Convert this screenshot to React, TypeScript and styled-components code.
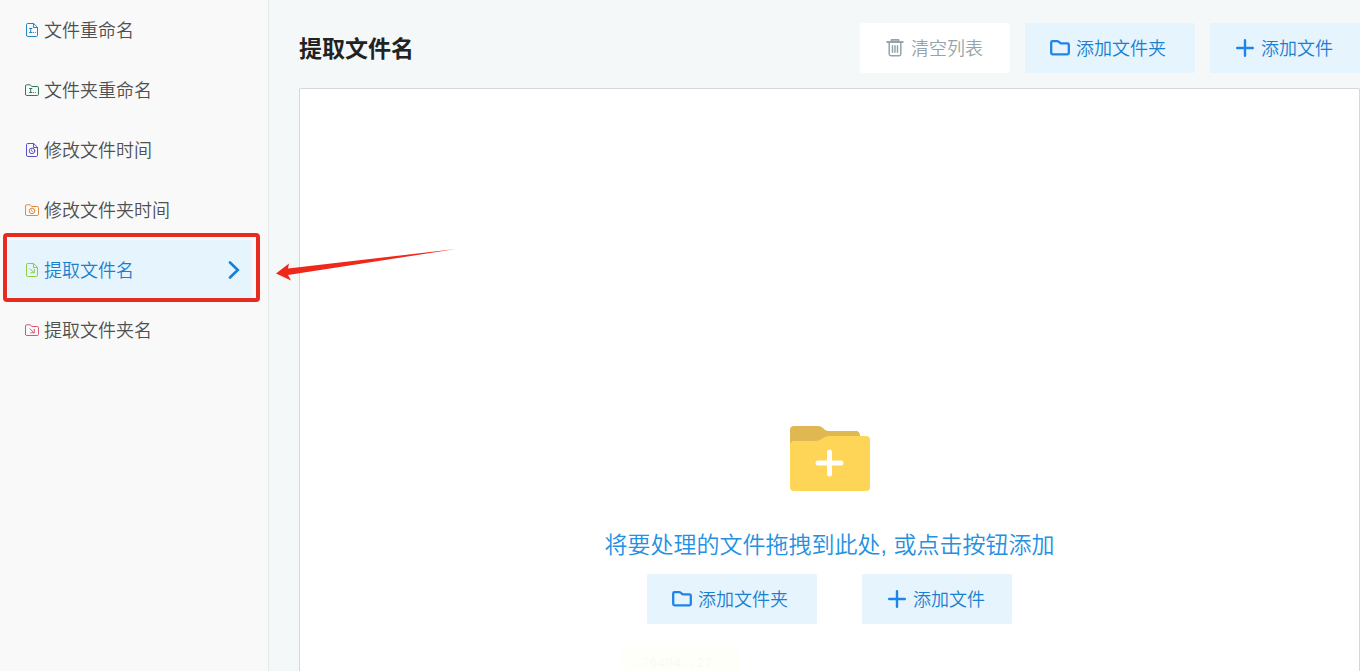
import React from "react";
import styled, { createGlobalStyle, css } from "styled-components";

const GlobalStyle = createGlobalStyle`
  *, *::before, *::after { box-sizing: border-box; }
  body {
    margin: 0;
    background: #f4f8f9;
    color: #505050;
    font-family: "Liberation Sans", "Noto Sans CJK SC", sans-serif;
    font-size: 18px;
    font-weight: 350;
    overflow: hidden;
  }
  button { font: inherit; border: 0; cursor: pointer; }
`;

const Page = styled.div`
  display: flex;
  min-height: 100vh;
`;

const Sidebar = styled.nav`
  flex: 0 0 269px;
  background: #f9f9f9;
  border-right: 1px solid #e6e9ea;
`;

const MenuList = styled.ul`
  list-style: none;
  margin: 0;
  padding: 0;
`;

const MenuItem = styled.li`
  position: relative;
  height: 60px;
  padding: 0 16px 0 8px;
`;

const MenuLink = styled.a<{ $active?: boolean }>`
  display: flex;
  align-items: center;
  gap: 4px;
  height: 100%;
  padding: 0 12px 0 16px;
  color: #505050;
  line-height: 24px;
  text-decoration: none;
  ${(p) => p.$active && css`
    background: #e6f4fd;
    color: #1b7fd0;
  `}
`;

const Label = styled.span`
  padding-top: 2px;
  white-space: nowrap;
`;

const MenuText = styled(Label)`
  flex: 1;
`;

const SmallIcon = styled.svg`
  width: 16px;
  height: 16px;
  flex: none;
  fill: none;
  stroke: currentColor;
  stroke-linejoin: round;
  stroke-linecap: round;
`;

const Chevron = styled.svg`
  width: 12px;
  height: 18px;
  fill: none;
  stroke: #1480d8;
  stroke-width: 2.6;
  stroke-linecap: round;
`;

const Highlight = styled.div`
  position: absolute;
  inset: -7px 8px -2px 3px;
  border: 4px solid #e62b20;
  border-radius: 4px;
  pointer-events: none;
`;

const Arrow = styled.svg`
  position: absolute;
  left: 276px;
  top: 8px;
  width: 182px;
  height: 34px;
  z-index: 1;
  pointer-events: none;
`;

const Main = styled.main`
  flex: 1;
  min-width: 0;
  display: flex;
  flex-direction: column;
  padding: 23px 0 0 30px;
`;

const Header = styled.header`
  display: flex;
  align-items: center;
  justify-content: space-between;
  margin-bottom: 15px;
`;

const Title = styled.h1`
  margin: 0;
  padding-top: 2px;
  color: #222;
  font-size: 23px;
  line-height: 32px;
  font-weight: 700;
`;

const Toolbar = styled.div`
  display: flex;
  gap: 15px;
`;

const ActionButton = styled.button<{ $muted?: boolean; $wide?: boolean }>`
  display: flex;
  align-items: center;
  gap: 6px;
  width: ${(p) => (p.$wide ? 170 : 150)}px;
  height: 50px;
  padding: 0 0 0 25px;
  border-radius: 2px;
  line-height: 24px;
  background: ${(p) => (p.$muted ? "#fff" : "#e6f4fd")};
  color: ${(p) => (p.$muted ? "#97a3a9" : "#1b7fd0")};
`;

const ButtonIcon = styled.svg`
  width: 20px;
  height: 20px;
  flex: none;
  fill: none;
`;

const DropZone = styled.section`
  position: relative;
  flex: 1;
  display: flex;
  flex-direction: column;
  align-items: center;
  padding-top: 337px;
  background: #fff;
  border: 1px solid #d3d9db;
  border-bottom: 0;
  border-radius: 2px 2px 0 0;
`;

const BigFolder = styled.svg`
  width: 80px;
  height: 65px;
`;

const Hint = styled.p`
  margin: 36px 0 11px;
  color: #2490e2;
  font-size: 23px;
  line-height: 36px;
`;

const DropActions = styled.div`
  display: flex;
  gap: 45px;
`;

const Notice = styled.div`
  position: absolute;
  left: 322px;
  bottom: 0;
  width: 118px;
  height: 23px;
  padding: 8px 0 0 12px;
  background: #fffffa;
  color: #fafaf3;
  font-family: "Liberation Mono", monospace;
  font-size: 13px;
  line-height: 16px;
`;

type Kind = "rename" | "time" | "extract";

const Glyph = ({ kind }: { kind: Kind }) => {
  if (kind === "rename")
    return <path d="M5.5 6.5h2.4M6.7 6.5v4M5.5 10.5h2.4M9.3 10.5h.2M11.3 10.5h.1" />;
  if (kind === "time")
    return (
      <>
        <circle cx="8" cy="8.9" r="2.8" />
        <path d="M7.6 7.7v1.4l1.1.7" strokeWidth="0.8" />
      </>
    );
  return <path d="M6 6.8l3.8 3.8M10.3 7.3v3.5H6.8" />;
};

const MenuIcon = ({ folder, kind, color }: { folder?: boolean; kind: Kind; color: string }) => (
  <SmallIcon viewBox="0 0 16 16" color={color} aria-hidden="true">
    {folder ? (
      <path d="M1.5 12.3V4q0-1.2 1.2-1.2h3.4l1.8 1.7h5.3q1.3 0 1.3 1.3v6.5q0 1.2-1.2 1.2H2.7q-1.2 0-1.2-1.2z" />
    ) : (
      <>
        <path d="M2.5 13.3V2.7q0-1.2 1.2-1.2h6l3.8 3.8v8q0 1.2-1.2 1.2H3.7q-1.2 0-1.2-1.2z" />
        <path d="M9.5 1.7v3.8h3.8" />
      </>
    )}
    <Glyph kind={kind} />
  </SmallIcon>
);

const FolderIcon = () => (
  <ButtonIcon viewBox="0 0 20 20" stroke="#1f84ea" strokeWidth="2.3" strokeLinejoin="round" aria-hidden="true">
    <path d="M1.2 15.1V4.5q0-1.3 1.3-1.3h4.8q.7 0 1.200.4L10.800 5.400h6.700q1.300 0 1.300 1.300v8.400q0 1.300-1.300 1.300H2.500q-1.300 0-1.300-1.300z" />
  </ButtonIcon>
);

const PlusIcon = () => (
  <ButtonIcon viewBox="0 0 20 20" stroke="#1f84ea" strokeWidth="2.4" strokeLinecap="round" aria-hidden="true">
    <path d="M10 2.2v15.6M2.2 10h15.6" />
  </ButtonIcon>
);

const TrashIcon = () => (
  <ButtonIcon
    viewBox="0 0 20 20"
    stroke="#97a3a9"
    strokeWidth="1.5"
    strokeLinejoin="round"
    strokeLinecap="round"
    aria-hidden="true"
  >
    <path d="M2.2 4h15.6M6.500 3.400V1.800h7v1.600" strokeWidth="1.8" />
    <path d="M4.200 5v11q0 1.700 1.700 1.700h8.200q1.700 0 1.700-1.700V5M7.500 7.800v6.500M10 7.800v6.500M12.500 7.800v6.500" />
  </ButtonIcon>
);

const AddButtons = () => (
  <>
    <ActionButton type="button" $wide>
      <FolderIcon />
      <Label>添加文件夹</Label>
    </ActionButton>
    <ActionButton type="button">
      <PlusIcon />
      <Label>添加文件</Label>
    </ActionButton>
  </>
);

const items: { label: string; kind: Kind; color: string; folder?: boolean; active?: boolean }[] = [
  { label: "文件重命名", kind: "rename", color: "#2387c4" },
  { label: "文件夹重命名", kind: "rename", color: "#35795a", folder: true },
  { label: "修改文件时间", kind: "time", color: "#5a4fc8" },
  { label: "修改文件夹时间", kind: "time", color: "#e58a3c", folder: true },
  { label: "提取文件名", kind: "extract", color: "#8ed03c", active: true },
  { label: "提取文件夹名", kind: "extract", color: "#dc5577", folder: true },
];

export default function App() {
  return (
    <Page lang="zh-CN">
      <GlobalStyle />
      <Sidebar>
        <MenuList>
          {items.map((item) => (
            <MenuItem key={item.label}>
              <MenuLink href="#" $active={item.active} aria-current={item.active ? "page" : undefined}>
                <MenuIcon kind={item.kind} color={item.color} folder={item.folder} />
                <MenuText>{item.label}</MenuText>
                {item.active && (
                  <Chevron viewBox="0 0 12 18" aria-hidden="true">
                    <path d="M2 1.5L9.8 9 2 16.5" />
                  </Chevron>
                )}
              </MenuLink>
              {item.active && (
                <>
                  <Highlight />
                  <Arrow viewBox="0 0 182 34" aria-hidden="true">
                    <path d="M0 25.5L13 15.5l-1 5L180 1 12 27l3 5.5z" fill="#f0281c" />
                  </Arrow>
                </>
              )}
            </MenuItem>
          ))}
        </MenuList>
      </Sidebar>
      <Main>
        <Header>
          <Title>提取文件名</Title>
          <Toolbar>
            <ActionButton type="button" $muted>
              <TrashIcon />
              <Label>清空列表</Label>
            </ActionButton>
            <AddButtons />
          </Toolbar>
        </Header>
        <DropZone>
          <BigFolder viewBox="0 0 80 65" aria-hidden="true">
            <path d="M0 20V4q0-4 4-4h24q3 0 5 2l2 2q2 1 4 1h27q4 0 4 5v10z" fill="#dfb853" />
            <path d="M0 19q0-4 4-4h22q4 0 7-3 3-2 6-2h37q4 0 4 4v47q0 4-4 4H4q-4 0-4-4z" fill="#ffd557" />
            <path d="M39.5 26v22M28 37h23" stroke="#fff" strokeWidth="5" strokeLinecap="round" />
          </BigFolder>
          <Hint>将要处理的文件拖拽到此处, 或点击按钮添加</Hint>
          <DropActions>
            <AddButtons />
          </DropActions>
          <Notice>.76404..27</Notice>
        </DropZone>
      </Main>
    </Page>
  );
}
